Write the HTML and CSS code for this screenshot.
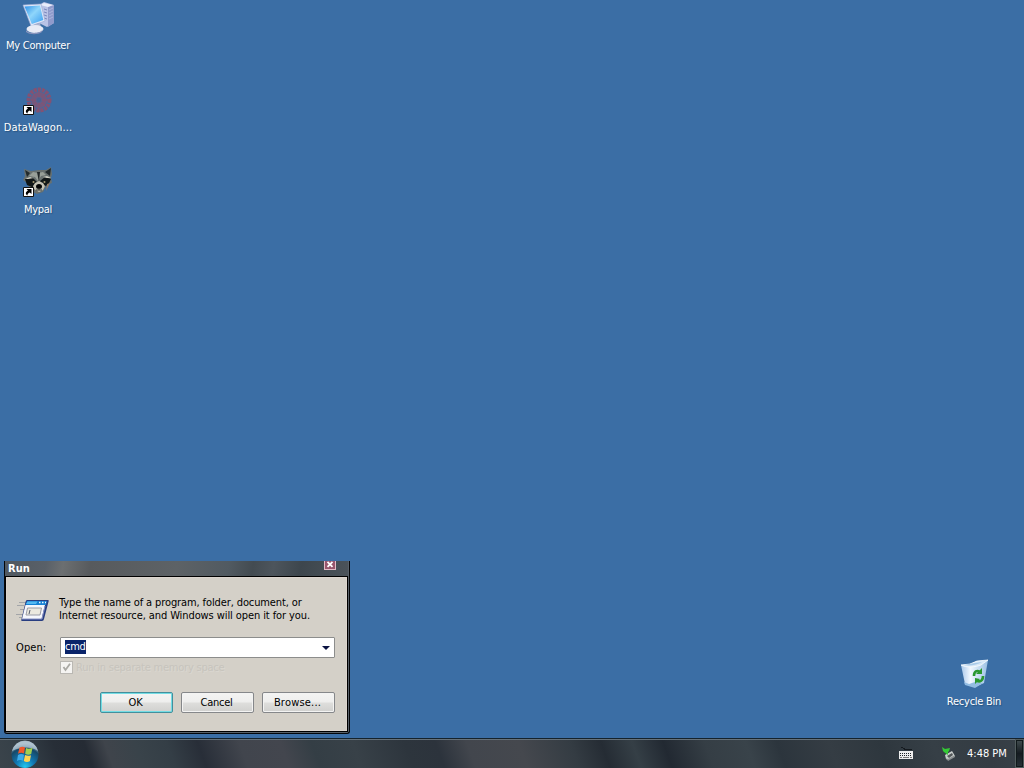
FILE: index.html
```html
<!DOCTYPE html>
<html lang="en">
<head>
<meta charset="utf-8">
<title>Desktop</title>
<link rel="stylesheet" href="styles.css">
</head>
<body>
<main class="desktop">
  <div class="shortcut computer">
    <svg width="34" height="34" viewBox="0 0 34 34">
      <defs>
        <linearGradient id="screen" x1="0" y1="0" x2="1" y2="1"><stop offset="0" stop-color="#2d8fe8"/><stop offset=".45" stop-color="#8fd6fb"/><stop offset="1" stop-color="#3a9df0"/></linearGradient>
      </defs>
      <path d="M18 4l5-3 10 3v18l-7 4-8-4z" fill="#b9c3e6"/>
      <path d="M27 6l6-2v18l-6 4z" fill="#8f9acb"/>
      <path d="M19 4l4-2 9 2-5 2z" fill="#e9edfb"/>
      <path d="M23 8l3 1M23 11l3 1M23 14l3 1M23 17l3 1" stroke="#7d89bd"/>
      <path d="M28 9l4-2M28 12l4-2M28 15l4-2M28 18l4-2" stroke="#aab5dc"/>
      <path d="M2 4l18-1 4 17-14 5z" fill="#dfe7f8" stroke="#9aa9d3" stroke-width=".6"/>
      <path d="M3.500 5.500l15.500-1 3.300 14.500-11.500 4z" fill="url(#screen)"/>
      <path d="M14 23l5-1 1 4-5 1z" fill="#aab3d0"/>
      <ellipse cx="14" cy="28" rx="8.500" ry="4" fill="#e8ebf5"/>
      <path d="M5 29c2 4 15 4 17-1l-1 3c-4 3-12 3-16 0z" fill="#8894bc"/>
    </svg>
    <span>My Computer</span>
  </div>
  <div class="shortcut wagon">
    <svg width="34" height="34" viewBox="0 0 34 34">
      <g fill="none" stroke="#b04255" opacity=".62">
        <circle cx="18" cy="17" r="10.500" stroke-width="4" stroke-dasharray="3 1"/>
        <circle cx="18" cy="17" r="5.500" stroke-width="5" opacity=".8"/>
        <path d="M10 9l16 16M26 9L10 25M18 5v24M7 17h23" stroke-width="1"/>
      </g>
      <circle cx="18" cy="17" r="2.200" fill="#4a6394"/>
      <path d="M2.500 22.500h10v9h-10z" fill="#fff" stroke="#111"/>
      <path d="M5.500 24h5v5l-1.600-1.600C7 28 6.500 29 6.500 30.500 4 29 4.500 27 7 25.500z" fill="#000"/>
    </svg>
    <span class="wide">DataWagon...</span>
  </div>
  <div class="shortcut mypal">
    <svg width="34" height="34" viewBox="0 0 34 34">
      <path d="M3 4l7 2 8-1 7 0 5-3 1 7-1 4 1 5-5 2-4 7-6 2-6-3-4-8-4-3 2-4z" fill="#68706f"/>
      <path d="M4 5l5 3-3 4zM30 3l-6 4 5 4z" fill="#222a2c"/>
      <path d="M12 7l5 1 5-1 3 3-5 1-3 5-3-4-6-1z" fill="#989f98"/>
      <path d="M4 14l7-2 5 5-3 6-7-3zM19 16l5-4 6 2-3 6-6 2z" fill="#111718"/>
      <path d="M16 7h3l-1 10z" fill="#202627"/>
      <path d="M4 14l5-2 4 1-6 1zM22 12l4-1 4 2-4 0z" fill="#cfcfc4"/>
      <path d="M14 18l4-2 4 2 2 3-2 4-4 2-5-3-1-3z" fill="#c4c2b5"/>
      <ellipse cx="18" cy="21.500" rx="3" ry="2.500" fill="#050708"/>
      <path d="M18 23v2M15 25h6" stroke="#303532"/>
      <circle cx="12.500" cy="17" r="1" fill="#a89c75"/><circle cx="23.500" cy="17" r="1" fill="#a89c75"/>
      <path d="M26 19l3-1-4 8z" fill="#937d68"/>
      <path d="M2.500 22.500h10v9h-10z" fill="#fff" stroke="#111"/>
      <path d="M5.500 24h5v5l-1.600-1.600C7 28 6.500 29 6.500 30.500 4 29 4.500 27 7 25.500z" fill="#000"/>
    </svg>
    <span>Mypal</span>
  </div>
  <div class="shortcut recycle">
    <svg width="34" height="34" viewBox="0 0 34 34">
      <defs><linearGradient id="bin"><stop offset="0" stop-color="#a9c8ea"/><stop offset=".35" stop-color="#f1f8ff"/><stop offset="1" stop-color="#9ac0e4"/></linearGradient></defs>
      <path d="M4 8l9-1 7-3 11-1-4 23-9 4-10-3z" fill="url(#bin)"/>
      <path d="M4 8c5 3 15 2 20 0l7-5-11 1-7 3z" fill="#d8e9f8" stroke="#fff" stroke-width=".7"/>
      <path d="M7 8c6 1 13 0 18-3l-7 1-6 1z" fill="#a9cae8"/>
      <path d="M7 25l5 2 6-2 8 1-8 5-10-3z" fill="#93bde3"/>
      <g fill="none" stroke="#2a9830" stroke-width="2.600"><path d="M17 19c0-5 3-6 6-4"/><path d="M26 19c0 5-3 6-6 5"/></g>
      <path d="M25 11v6h-6zM18 21v6l5-5z" fill="#2a9830"/>
    </svg>
    <span>Recycle Bin</span>
  </div>

  <section class="run">
    <header class="titlebar">
      <b>Run</b>
      <svg class="close" width="12" height="9" viewBox="0 0 12 9"><path d="M0 0h12v9H0z" fill="#e3bcc7"/><path d="M1 0h10v8H1z" fill="#98566d"/><path d="M3.500 .8l5 5M8.500 .8l-5 5" stroke="#fff" stroke-width="1.800"/></svg>
    </header>
    <div class="client">
      <div class="intro">
        <svg width="34" height="26" viewBox="0 0 34 26">
          <path d="M3 5.500h8M1 8.500h7M4 12.500h4M0 17.500h7M3 20.500h4" stroke="#a3a5a8"/>
          <path d="M11 3h21q1 0 .7 1L28 22q-.3 2-2 2H6q-1 0-.7-1L9.500 5q.5-2 1.500-2z" fill="#283d80"/>
          <path d="M11 4h20l-1 4H9.500z" fill="#1681d4"/>
          <path d="M11.500 4.500h10L20 7H10z" fill="#55b9f2"/>
          <path d="M23 5.500h1.500M26 5.500h1.500M29 5.500h1" stroke="#e9f7ff" stroke-width="1.500"/>
          <path d="M9.500 8H29l-3.500 14H6z" fill="#f6f7fc"/>
          <path d="M11.500 11h14l-1.500 7H10z" fill="#ece9df" stroke="#999ba6"/>
          <path d="M14 13l-1 4" stroke="#555b6b"/>
          <path d="M6 22h20l3-13" fill="none" stroke="#8992c5"/>
        </svg>
        <p><span class="l1">Type the name of a program, folder, document, or</span><br><span class="l2">Internet resource, and Windows will open it for you.</span></p>
      </div>
      <div class="open">
        <label>Open:</label>
        <div class="combo"><span>cmd</span><i></i></div>
      </div>
      <div class="memory"><span class="check"><svg width="11" height="11" viewBox="0 0 11 11"><path d="M2.500 5l2 3L9 1.800" fill="none" stroke="#aaa9a4" stroke-width="1.800"/></svg></span><span class="ghost">Run in separate memory space</span></div>
      <div class="buttons"><div class="button primary">OK</div><div class="button">Cancel</div><div class="button browse">Browse...</div></div>
    </div>
  </section>
</main>
<footer class="taskbar">
  <svg class="start" width="28" height="28" viewBox="0 0 28 28">
    <defs><radialGradient id="orb" cx=".5" cy=".95" r=".85"><stop offset="0" stop-color="#24c8ee"/><stop offset=".4" stop-color="#1277b2"/><stop offset=".8" stop-color="#164867"/><stop offset="1" stop-color="#a5b8c4"/></radialGradient></defs>
    <circle cx="14" cy="14.500" r="13.500" fill="url(#orb)"/>
    <path d="M1 11a13.300 13.300 0 0 1 26 0c-8-5-18-4-26 0z" fill="#b3c6d3" opacity=".75"/>
    <path d="M8.500 7.500q3-1.500 5.500 0l-1 6q-3-1.500-6 .2z" fill="#ef582b"/>
    <path d="M15 8q3 1.500 6.500-.2l-1.300 6.200q-3 1.500-6-.2z" fill="#a4cf4f"/>
    <path d="M7 15q3-1.700 6-.2l-1 6q-3-1.500-6 .2z" fill="#3daae8"/>
    <path d="M14 15q3 1.500 6 .2l-1.200 6q-3 1.500-6-.2z" fill="#ffd34f"/>
  </svg>
  <div class="tray">
    <svg class="keyboard" width="16" height="14" viewBox="0 0 16 14"><path d="M3 .5h2M5 1.500h2M6 2.500h8" stroke="#151a1f"/><path d="M1 4h14v8H1z" fill="#eee"/><path d="M2 6.500h12M2 8.500h12" stroke="#20252a" stroke-dasharray="1 1"/><path d="M2 10.500h2M5 10.500h6M12 10.500h2" stroke="#777"/></svg>
    <svg class="device" width="16" height="16" viewBox="0 0 16 16"><path d="M4 9l7-4 3 5-7 4-2-1z" fill="#c9cecc"/><path d="M6 10l5-3 1 2-4 3z" fill="#53585a"/><path d="M5 12l2 1 7-4v2l-7 4z" fill="#8b9091"/><path d="M1 1l3 2 5-1-1 3-1 1v3l-4-3-1-1z" fill="#35c936"/></svg>
    <time>4:48 PM</time>
  </div>
  <div class="peek"></div>
</footer>
</body>
</html>
```
FILE: styles.css
```css
* { box-sizing: border-box; }
body {
  margin: 0;
  width: 1024px;
  height: 768px;
  display: flex;
  flex-direction: column;
  overflow: hidden;
  background: #3b6ea5;
  font: 11px/13px "DejaVu Sans Condensed", "DejaVu Sans", sans-serif;
  font-stretch: condensed;
  letter-spacing: -.25px;
  white-space: nowrap;
}
svg { display: block; flex: none; }
.desktop { position: relative; flex: 1; }
.shortcut {
  position: absolute;
  width: 76px;
  display: flex;
  flex-direction: column;
  align-items: center;
  gap: 4px;
  color: #fff;
  text-shadow: 1px 1px 1px #28537f;
}
.computer { left: 0; top: 1px; }
.wagon { left: 0; top: 83px; }
.mypal { left: 0; top: 165px; }
.recycle { left: 936px; top: 657px; }
.wide { letter-spacing: .15px; }
.run {
  position: absolute;
  left: 4px;
  top: 561px;
  width: 346px;
  height: 173px;
  padding: 0 1px 1px 0;
  background: #596169;
  border: 1px solid #05070a;
  border-top: 0;
  border-radius: 0 0 3px 3px;
}
.titlebar {
  height: 15px;
  display: flex;
  justify-content: space-between;
  padding: 0 12px 0 3px;
  color: #fff;
  background: linear-gradient(100deg, #505860 0, #596068 12%, #6c6f71 17%, #575a5d 25%, #5d6266 50%, #515a61 65%, #434b51 72%, #4d555c 78%, #3d464d 86%, #4b535a);
}
.titlebar b { font: bold 11px/15px "DejaVu Sans Condensed", sans-serif; font-stretch: condensed; letter-spacing: .1px; }
.client {
  height: 156px;
  padding: 19px 11px 0 10px;
  background: #d4d0c8;
  border: 1px solid #000;
  box-shadow: inset 0 0 0 1px #dcd5ce;
}
.intro { display: flex; gap: 9px; }
.intro svg { margin-top: 1px; }
.intro p { margin: 0; }
.l1 { letter-spacing: -.11px; }
.l2 { letter-spacing: -.09px; }
.open { display: flex; align-items: center; margin-top: 14px; }
.open label { width: 44px; letter-spacing: .1px; }
.combo {
  width: 275px;
  height: 21px;
  display: flex;
  align-items: center;
  justify-content: space-between;
  padding: 0 4px 0 4px;
  background: #fff;
  border: 1px solid #8c8d8c;
  border-radius: 1px;
}
.combo span { height: 14px; line-height: 14px; margin-top: -1px; padding-right: .5px; color: #fff; background: #0a246a; }
.combo i { width: 0; height: 0; border: 4px solid transparent; border-top-color: #0a1241; border-bottom: 0; }
.memory { display: flex; align-items: center; gap: 3px; margin: 3px 0 0 44px; }
.check { width: 13px; height: 13px; background: #f5f4f2; border: 1px solid #bab8b3; }
.ghost { color: #c7c4bd; text-shadow: 1px 1px #dad7d0; letter-spacing: -.22px; }
.buttons { display: flex; gap: 8px; margin: 18px 0 0 84px; }
.button {
  width: 73px;
  height: 21px;
  line-height: 20px;
  padding-right: 2px;
  text-align: center;
  border: 1px solid #85878a;
  border-radius: 2px;
  background: linear-gradient(#f4f4f3 0, #eeeeed 48%, #dededc 52%, #d0d0ce);
  box-shadow: inset 0 0 0 1px #f3f3f2;
}
.browse { letter-spacing: .2px; }
.primary { border-color: #438f9c; box-shadow: inset 0 0 0 1px #72dce4; }
.taskbar {
  height: 30px;
  flex: none;
  display: flex;
  align-items: center;
  border-top: 1px solid #15222b;
  box-shadow: inset 0 1px #65717a;
  background: linear-gradient(70deg, #3b444b 0, #343f47 3%, #272e37 6%, #252b34 9%, #3f444b 11%, #39434a 14%, #343e46 17%, #282e38 20%, #41454d 24%, #43464e 28%, #343e45 31%, #384148 35%, #2d353d 40%, #2c333c 43%, #42464d 46%, #45484e 51%, #343c43 56%, #252c34 59%, #353f46 62%, #222932 65%, #353e45 69%, #39434a 73%, #2c353d 76%, #353d44 81%, #2e373e 86%, #363f46 91%, #343c43 96%, #384148);
}
.start { margin: 1px 0 0 11px; }
.tray { margin-left: auto; display: flex; align-items: center; color: #fff; }
.keyboard { margin-right: 27px; }
.device { margin-right: 10px; }
.tray time { width: 40px; letter-spacing: 0; }
.peek {
  width: 9px;
  height: 29px;
  margin-left: 8px;
  border: 1px solid #525d5e;
  box-shadow: inset 0 0 0 1px #10191b;
  background: linear-gradient(#424d50, #141b20 50%, #273137);
}
```
